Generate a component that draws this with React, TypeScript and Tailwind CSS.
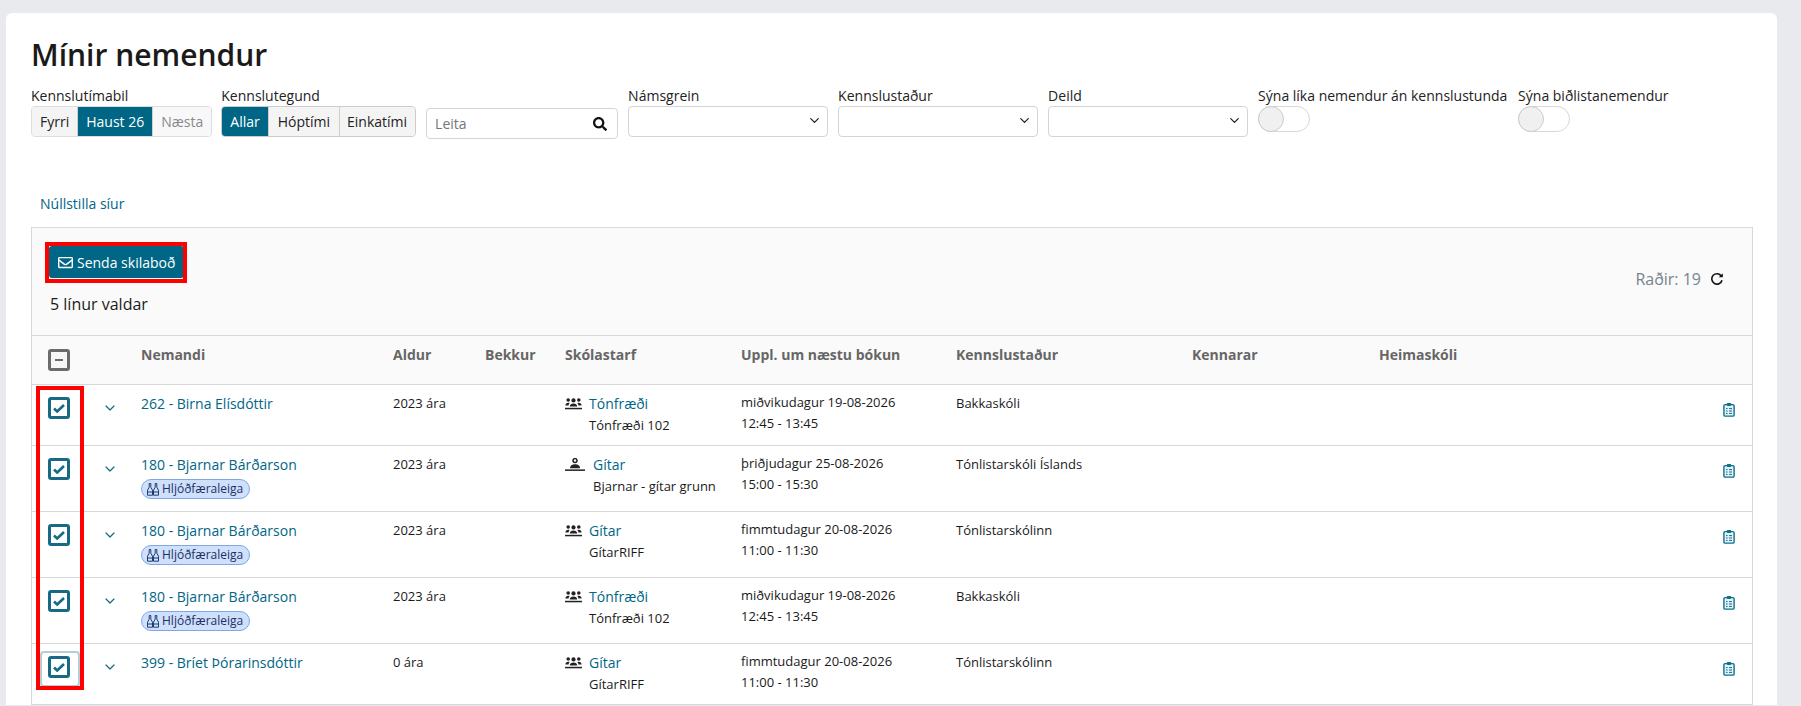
import { ChevronDown } from "lucide-react";
import { FaRegEnvelope, FaSearch } from "react-icons/fa";

const gridCols = "grid grid-cols-[60px_49px_252px_92px_80px_176px_215px_236px_187px_1fr]";

const headers = ["Nemandi", "Aldur", "Bekkur", "Skólastarf", "Uppl. um næstu bókun", "Kennslustaður", "Kennarar", "Heimaskóli"];

const rows = [
  { name: "262 - Birna Elísdóttir", age: "2023 ára", badge: false, solo: false, course: "Tónfræði", group: "Tónfræði 102", day: "miðvikudagur 19-08-2026", time: "12:45 - 13:45", place: "Bakkaskóli", h: "h-[61px]" },
  { name: "180 - Bjarnar Bárðarson", age: "2023 ára", badge: true, solo: true, course: "Gítar", group: "Bjarnar - gítar grunn", day: "þriðjudagur 25-08-2026", time: "15:00 - 15:30", place: "Tónlistarskóli Íslands", h: "h-[66px]" },
  { name: "180 - Bjarnar Bárðarson", age: "2023 ára", badge: true, solo: false, course: "Gítar", group: "GítarRIFF", day: "fimmtudagur 20-08-2026", time: "11:00 - 11:30", place: "Tónlistarskólinn", h: "h-[66px]" },
  { name: "180 - Bjarnar Bárðarson", age: "2023 ára", badge: true, solo: false, course: "Tónfræði", group: "Tónfræði 102", day: "miðvikudagur 19-08-2026", time: "12:45 - 13:45", place: "Bakkaskóli", h: "h-[66px]" },
  { name: "399 - Bríet Þórarinsdóttir", age: "0 ára", badge: false, solo: false, course: "Gítar", group: "GítarRIFF", day: "fimmtudagur 20-08-2026", time: "11:00 - 11:30", place: "Tónlistarskólinn", h: "h-[61px]" },
];

function GroupIcon() {
  return (
    <svg width="17" height="14" viewBox="0 0 17 14" fill="#222" className="shrink-0">
      <circle cx="8.5" cy="3.4" r="2.1" />
      <circle cx="3.2" cy="3" r="1.8" />
      <circle cx="13.8" cy="3" r="1.8" />
      <path d="M4.8 9.6c0-2.2 1.6-3.2 3.7-3.2s3.7 1 3.7 3.2z" />
      <path d="M0.4 8.6c0-1.9 1.1-2.9 2.9-2.9.5 0 1 .1 1.3.2-.7.7-1 1.6-1 2.7z" />
      <path d="M16.6 8.6c0-1.9-1.1-2.9-2.9-2.9-.5 0-1 .1-1.3.2.7.7 1 1.6 1 2.7z" />
      <rect x="0" y="10.8" width="17" height="1.5" />
    </svg>
  );
}

function SoloIcon() {
  return (
    <svg width="20" height="14" viewBox="0 0 20 14" fill="#222" className="shrink-0">
      <circle cx="10" cy="2.6" r="2" fill="none" stroke="#222" strokeWidth="1.5" />
      <path d="M5 10.2c0-2.8 2.2-4 5-4s5 1.2 5 4z" />
      <rect x="0" y="11.4" width="20" height="1.5" />
    </svg>
  );
}

function InstrumentIcon() {
  return (
    <svg width="12" height="15" viewBox="0 0 12 15" fill="none" stroke="#1e3a70" strokeWidth="1" className="shrink-0">
      <path d="M2.2 1.5h1.6v3.7l1.7 3v5H.5v-5l1.7-3z" />
      <path d="M8.2 1.5h1.6v3.7l1.7 3v5h-5v-5l1.7-3z" />
      <path d="M.5 10h5M6.5 10h5" />
    </svg>
  );
}

function ClipboardIcon() {
  return (
    <svg width="12" height="15" viewBox="0 0 12 15" className="shrink-0">
      <rect x="0.9" y="2.6" width="10.2" height="11.5" rx="1.2" fill="#e3f2f7" stroke="#0f6f8c" strokeWidth="1.4" />
      <rect x="3.8" y="0.9" width="4.4" height="3" rx="0.8" fill="#0f6f8c" />
      <path d="M3 6.6h1.6M6 6.6h3M3 9h1.6M6 9h3M3 11.4h1.6M6 11.4h3" stroke="#0f6f8c" strokeWidth="1" />
    </svg>
  );
}

function RefreshIcon() {
  return (
    <svg width="14" height="14" viewBox="0 0 14 14" fill="none" className="shrink-0">
      <path d="M11.4 4.2A5.2 5.2 0 1 0 12 8.2" stroke="#111" strokeWidth="1.6" />
      <path d="M8.8 5.2h4V1.2z" fill="#111" />
    </svg>
  );
}

function Check({ dash }: { dash?: boolean }) {
  if (dash) {
    return (
      <span className="flex h-[22px] w-[22px] items-center justify-center rounded-[3px] border-[3px] border-[#6b6b6b] bg-[#f7f7f7]">
        <span className="h-[2px] w-[8px] bg-[#6b6b6b]" />
      </span>
    );
  }
  return (
    <span className="flex h-[22px] w-[22px] items-center justify-center rounded-[3px] border-[3px] border-[#166a85] bg-white">
      <svg width="12" height="9" viewBox="0 0 12 9" fill="none" stroke="#166a85" strokeWidth="2.6">
        <path d="M1 4.5l3.2 3L11 1" />
      </svg>
    </span>
  );
}

function Label({ children }: { children: string }) {
  return <div className="h-[20px] text-[14px] leading-[20px] whitespace-nowrap text-[#222222]">{children}</div>;
}

function Toggle() {
  return (
    <div className="flex h-[26px] w-[52px] rounded-full border border-[#d8d8d8] bg-white">
      <span className="-m-px h-[26px] w-[26px] rounded-full border border-[#cccccc] bg-[#f0f0f0]" />
    </div>
  );
}

function Select({ label }: { label: string }) {
  return (
    <div className="w-[200px]">
      <Label>{label}</Label>
      <div className="flex h-[31px] items-center justify-end rounded-[4px] border border-[#d4d4d4] bg-white pr-[5px]">
        <ChevronDown size={15} strokeWidth={2} className="mb-[3px] text-[#222222]" />
      </div>
    </div>
  );
}

function Segment({ children, active, muted, last, pad = "px-[8px]" }: { children: string; active?: boolean; muted?: boolean; last?: boolean; pad?: string }) {
  let tone = "bg-[#f4f4f4] text-[#222222]";
  if (active) tone = "bg-[#006685] text-white";
  if (muted) tone = "bg-[#f8f8f8] text-[#8a8a8a]";
  return (
    <span className={`flex h-full items-center ${pad} text-[14px] ${tone} ${last ? "" : "border-r border-[#cfcfcf]"}`}>
      {children}
    </span>
  );
}

export default function App() {
  return (
    <div className="h-[706px] overflow-hidden bg-[#e9eaee] pt-[13px] pr-[24px] pl-[6px] font-['Open_Sans',sans-serif]">
      <div className="rounded-t-[6px] bg-white pr-[24px] pl-[25px]">
        <h1 className="pt-[18px] text-[30px] leading-[48px] font-semibold text-[#1a1a1a]">Mínir nemendur</h1>

        <div className="mt-[7px] flex h-[108px] items-start">
          <div className="mr-[9px]">
            <Label>Kennslutímabil</Label>
            <div className="flex h-[31px] overflow-hidden rounded-[4px] border border-[#dddddd]">
              <Segment>Fyrri</Segment>
              <Segment active>Haust 26</Segment>
              <Segment muted last>Næsta</Segment>
            </div>
          </div>
          <div className="mr-[10px]">
            <Label>Kennslutegund</Label>
            <div className="flex h-[31px] overflow-hidden rounded-[4px] border border-[#cccccc]">
              <Segment active>Allar</Segment>
              <Segment pad="px-[9px]">Hóptími</Segment>
              <Segment last pad="pr-[8px] pl-[7px]">Einkatími</Segment>
            </div>
          </div>
          <div className="mt-[22px] mr-[10px] flex h-[31px] w-[192px] items-center justify-between rounded-[4px] border border-[#d4d4d4] bg-white pr-[10px] pl-[8px]">
            <span className="text-[14px] text-[#757575]">Leita</span>
            <FaSearch size={14} className="text-[#111111]" />
          </div>
          <div className="flex gap-[10px]">
            <Select label="Námsgrein" />
            <Select label="Kennslustaður" />
            <Select label="Deild" />
            <div className="w-[250px]">
              <Label>Sýna líka nemendur án kennslustunda</Label>
              <Toggle />
            </div>
            <div>
              <Label>Sýna biðlistanemendur</Label>
              <Toggle />
            </div>
          </div>
        </div>

        <div className="h-[33px] pl-[9px] text-[14px] leading-[20px] text-[#006685]">Núllstilla síur</div>

        <div className="relative border border-b-0 border-[#d8d8d8]">
          <div className="flex h-[108px] justify-between border-b border-[#d8d8d8] bg-[#fafafa]">
            <div className="pt-[18px] pl-[17px]">
              <div className="relative w-fit">
                <button type="button" className="flex h-[32px] items-center gap-[4px] rounded-[3px] bg-[#006685] px-[9px] text-[14px] text-white">
                  <FaRegEnvelope size={15} />
                  Senda skilaboð
                </button>
                <span className="absolute -top-[4px] -right-[3px] -bottom-[5px] -left-[4px] border-[4px] border-[#ff0000]" />
              </div>
              <div className="mt-[14px] pl-[1px] text-[16px] leading-[24px] text-[#1a1a1a]">5 línur valdar</div>
            </div>
            <div className="flex items-center gap-[9px] pr-[28px] pb-[6px]">
              <span className="text-[16px] text-[#77838f]">Raðir: 19</span>
              <RefreshIcon />
            </div>
          </div>

          <div className={`${gridCols} h-[49px] border-b border-[#d8d8d8] bg-[#fafafa] text-[14px] font-bold text-[#666666]`}>
            <div className="pt-[13px] pl-[16px]">
              <Check dash />
            </div>
            <div />
            {headers.map((h) => (
              <div key={h} className="pt-[8px] whitespace-nowrap">{h}</div>
            ))}
          </div>

          {rows.map((r, i) => (
            <div key={i} className={`${gridCols} ${r.h} border-b border-[#d8d8d8] bg-white text-[13px] text-[#1a1a1a]`}>
              <div className="relative pt-[12px] pl-[16px]">
                <Check />
                {i === 4 && <span className="absolute top-[7px] left-[8px] h-[36px] w-[40px] rounded-[4px] border-2 border-[#b5cdd6]" />}
              </div>
              <div className="pt-[15px] pl-[10px]">
                <ChevronDown size={16} strokeWidth={1.8} className="text-[#166a85]" />
              </div>
              <div className="pt-[8px]">
                <div className="text-[14px] leading-[22px] text-[#006685]">{r.name}</div>
                {r.badge && (
                  <span className="mt-[3px] flex h-[20px] w-[109px] items-center gap-[3px] rounded-full border border-[#7ea6e8] bg-[#cfe0fb] pl-[5px] text-[12px] text-[#1e2f66]">
                    <InstrumentIcon />
                    Hljóðfæraleiga
                  </span>
                )}
              </div>
              <div className="pt-[8px] leading-[20px]">{r.age}</div>
              <div />
              <div className="pt-[8px]">
                <div className={`flex items-center ${r.solo ? "gap-[8px]" : "gap-[7px]"}`}>
                  {r.solo ? <SoloIcon /> : <GroupIcon />}
                  <span className="text-[14px] leading-[22px] text-[#006685]">{r.course}</span>
                </div>
                <div className={`whitespace-nowrap leading-[20px] ${r.solo ? "pl-[28px]" : "pl-[24px]"}`}>{r.group}</div>
              </div>
              <div className="pt-[7px] leading-[21px]">
                <div>{r.day}</div>
                <div>{r.time}</div>
              </div>
              <div className="pt-[8px] leading-[20px]">{r.place}</div>
              <div />
              <div className="col-start-10 flex justify-end pt-[17px] pr-[17px]">
                <ClipboardIcon />
              </div>
            </div>
          ))}

          <span className="absolute top-[158px] left-[4px] h-[304px] w-[48px] border-[4px] border-[#ff0000]" />
        </div>
      </div>
    </div>
  );
}
